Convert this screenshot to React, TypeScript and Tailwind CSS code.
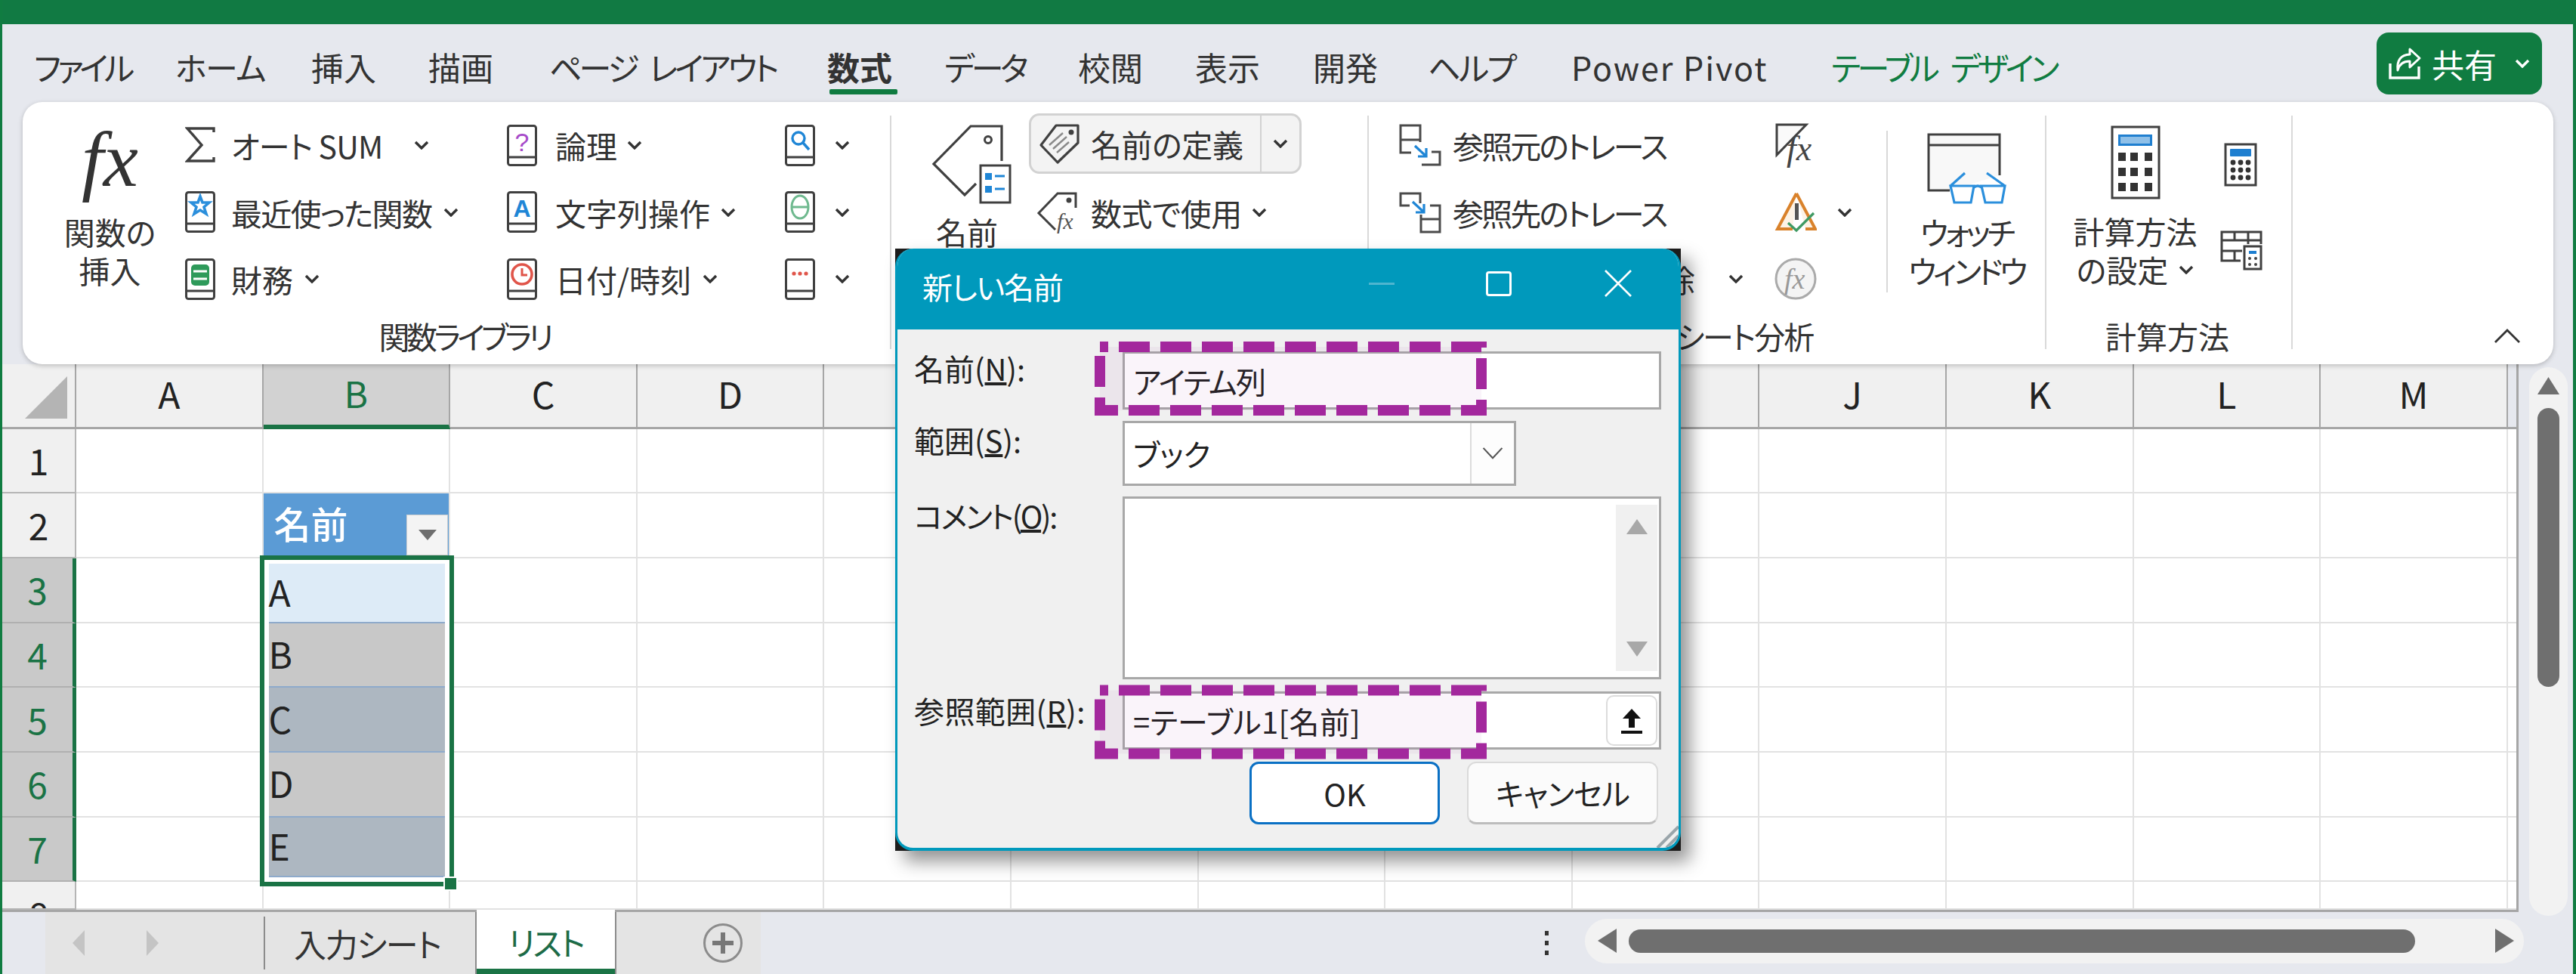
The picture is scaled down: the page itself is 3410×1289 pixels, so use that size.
import * as React from "react";

const INK = "#404040";
const COLS = ["A", "B", "C", "D", "E", "F", "G", "H", "I", "J", "K", "L", "M"];
const ROWS = [1, 2, 3, 4, 5, 6, 7, 8];

const TABS = [
  { label: "ファイル", w: "w-[187px]", cls: "tracking-[-0.12em]" },
  { label: "ホーム", w: "w-[180px]", cls: "tracking-[-0.03em]" },
  { label: "挿入", w: "w-[155px]", cls: "" },
  { label: "描画", w: "w-[160px]", cls: "" },
  { label: "ページ レイアウト", w: "w-[368px]", cls: "tracking-[-0.09em] [word-spacing:0.25em]" },
  { label: "数式", w: "w-[155px]", cls: "font-bold", active: true },
  { label: "データ", w: "w-[177px]", cls: "tracking-[-0.1em]" },
  { label: "校閲", w: "w-[155px]", cls: "" },
  { label: "表示", w: "w-[156px]", cls: "" },
  { label: "開発", w: "w-[152px]", cls: "" },
  { label: "ヘルプ", w: "w-[190px]", cls: "tracking-[-0.06em]" },
  { label: "Power Pivot", w: "w-[344px]", cls: "tracking-[0.045em]" },
  { label: "テーブル デザイン", w: "w-[320px]", cls: "text-[#107c41] tracking-[-0.1em] [word-spacing:0.3em]" },
];

function Chevron(props: { className?: string; color?: string }) {
  return (
    <svg viewBox="0 0 20 12" className={props.className ?? "w-[20px] h-[12px] shrink-0"}>
      <polyline points="2,2 10,10 18,2" fill="none" stroke={props.color ?? "#333"} strokeWidth="3.4" />
    </svg>
  );
}

function Book(props: { children?: React.ReactNode }) {
  return (
    <svg viewBox="0 0 40 55" className="w-[40px] h-[55px] shrink-0">
      <rect x="1.5" y="1.5" width="37" height="52" rx="3" fill="#fff" stroke={INK} strokeWidth="3" />
      <line x1="2" y1="43" x2="38" y2="43" stroke={INK} strokeWidth="3" />
      {props.children}
    </svg>
  );
}

function Sigma() {
  return (
    <svg viewBox="0 0 40 50" className="w-[40px] h-[50px] shrink-0">
      <polyline points="38,8 38,3 3,3 22,25 3,46 38,46 38,41" fill="none" stroke={INK} strokeWidth="3.4" />
    </svg>
  );
}

function RibbonItem(props: {
  icon?: React.ReactNode;
  label: string;
  iconW: string;
  labelW: string;
  labelCls?: string;
  chevron?: boolean;
  chevronCls?: string;
}) {
  return (
    <div className="flex items-center h-full">
      <div className={`${props.iconW} shrink-0 flex items-center`}>{props.icon}</div>
      <div className={`${props.labelW} ${props.labelCls ?? ""} shrink-0 whitespace-nowrap text-[41px] leading-[50px]`}>{props.label}</div>
      {props.chevron ? <Chevron className={`w-[20px] h-[12px] shrink-0 ${props.chevronCls ?? ""}`} /> : null}
    </div>
  );
}

function GroupLabel(props: { children: React.ReactNode; className?: string }) {
  return <div className={`h-[64px] flex items-center justify-center text-[41px] whitespace-nowrap ${props.className ?? ""}`}>{props.children}</div>;
}

function Separator() {
  return <div className="w-[2px] h-[309px] mt-[18px] bg-[#d9d9d9] shrink-0" />;
}

function BigTag() {
  return (
    <svg viewBox="1230 160 110 112" className="w-[110px] h-[112px] shrink-0">
      <path d="M1326 213 V167 H1285 L1236 217 L1277 258 L1292 243" fill="none" stroke={INK} strokeWidth="3.2" />
      <circle cx="1308" cy="185" r="4.5" fill="none" stroke={INK} strokeWidth="3" />
      <rect x="1298" y="219" width="39" height="49" fill="#fff" stroke={INK} strokeWidth="3" />
      <rect x="1304" y="229" width="9" height="9" fill="#1f86d6" />
      <rect x="1304" y="246" width="9" height="9" fill="#1f86d6" />
      <line x1="1317" y1="233" x2="1330" y2="233" stroke="#1f86d6" strokeWidth="3" />
      <line x1="1317" y1="250" x2="1330" y2="250" stroke="#1f86d6" strokeWidth="3" />
    </svg>
  );
}

function SmallTag() {
  return (
    <svg viewBox="1374 160 56 56" className="w-[56px] h-[56px] shrink-0">
      <path d="M1426 164 H1397 L1377 190 L1399 213 L1426 187 Z" fill="none" stroke={INK} strokeWidth="3.2" strokeLinejoin="round" />
      <circle cx="1417" cy="173" r="3.5" fill={INK} />
      <path d="M1388 190 L1406 174 M1393 195 L1411 179 M1398 200 L1414 186" stroke="#8a8a8a" strokeWidth="2.4" />
    </svg>
  );
}

function FxTag() {
  return (
    <svg viewBox="1374 250 58 58" className="w-[58px] h-[58px] shrink-0">
      <path d="M1426 273 V254 H1402 L1377 280 L1399 302" fill="none" stroke={INK} strokeWidth="3" />
      <circle cx="1417" cy="263" r="3.5" fill={INK} />
      <text x="1401" y="301" fontSize="30" fontStyle="italic" fontFamily="'Liberation Serif', serif" fill="#555">fx</text>
    </svg>
  );
}

function TraceFrom() {
  return (
    <svg viewBox="1850 160 60 60" className="w-[60px] h-[60px] shrink-0">
      <path d="M1880 186 V164 H1854 V200 H1868 M1854 183 H1880" fill="none" stroke="#4a4a4a" strokeWidth="3" />
      <path d="M1895 199 H1906 V216 H1882" fill="none" stroke="#4a4a4a" strokeWidth="3" />
      <path d="M1873 191 L1887 204 M1888 194 V205 H1877" fill="none" stroke="#1f86d6" strokeWidth="3.2" />
    </svg>
  );
}

function TraceTo() {
  return (
    <svg viewBox="1850 250 60 60" className="w-[60px] h-[60px] shrink-0">
      <path d="M1866 271 H1854 V255 H1880 V268" fill="none" stroke="#4a4a4a" strokeWidth="3" />
      <path d="M1893 271 H1906 V306 H1881 V283 M1881 289 H1906" fill="none" stroke="#4a4a4a" strokeWidth="3" />
      <path d="M1870 266 L1884 279 M1885 269 V280 H1874" fill="none" stroke="#1f86d6" strokeWidth="3.2" />
    </svg>
  );
}

function FxShow() {
  return (
    <svg viewBox="0 0 60 60" className="w-[60px] h-[60px] shrink-0">
      <path d="M7 3 H46 L7 43 Z" fill="#fafafa" stroke={INK} strokeWidth="3" />
      <text x="20" y="50" fontSize="46" fontStyle="italic" fontFamily="'Liberation Serif', serif" fill="#444">fx</text>
    </svg>
  );
}

function ErrorCheck() {
  return (
    <svg viewBox="0 0 60 60" className="w-[60px] h-[60px] shrink-0">
      <path d="M33 5 L58 52 H45 M28 52 H8 L33 5" fill="#fdf3e6" stroke="#d9822b" strokeWidth="4" />
      <rect x="31" y="18" width="5" height="22" fill="#555" />
      <polyline points="22,44 33,54 56,31" fill="none" stroke="#3f9a63" strokeWidth="3.2" />
    </svg>
  );
}

function FxCircle() {
  return (
    <svg viewBox="0 0 60 60" className="w-[60px] h-[60px] shrink-0">
      <circle cx="32" cy="30" r="26" fill="#f4f4f4" stroke="#aaa" strokeWidth="3" />
      <text x="17" y="43" fontSize="38" fontStyle="italic" fontFamily="'Liberation Serif', serif" fill="#999">fx</text>
    </svg>
  );
}

function WatchWindow() {
  return (
    <svg viewBox="2545 170 115 105" className="w-[115px] h-[105px] shrink-0">
      <path d="M2580 252 H2552 V178 H2646 V232" fill="#f8f8f8" stroke={INK} strokeWidth="3" />
      <line x1="2552" y1="192" x2="2646" y2="192" stroke={INK} strokeWidth="3" />
      <path d="M2581 246 H2612 L2608 268 H2586 Z M2622 246 H2653 L2649 268 H2627 Z M2612 248 Q2617 244 2622 248 M2581 246 L2600 229 M2653 246 L2629 229" fill="#fff" stroke="#2b8fdc" strokeWidth="3.2" />
    </svg>
  );
}

function CalcBig() {
  const xs = [2801, 2817, 2836];
  const ys = [202, 222, 242];
  return (
    <svg viewBox="2788 165 72 100" className="w-[72px] h-[100px] shrink-0">
      <rect x="2793" y="168" width="62" height="94" fill="#fff" stroke={INK} strokeWidth="3" />
      <rect x="2801" y="178" width="45" height="15" fill="#1f7fd0" />
      <rect x="2804" y="181" width="39" height="9" fill="#8fc0e8" />
      {ys.map((y) => xs.map((x) => <rect key={`${x}-${y}`} x={x} y={y} width="10" height="11" fill="#333" />))}
    </svg>
  );
}

function CalcSmall() {
  const xs = [2957, 2967, 2977];
  const ys = [215, 225, 235];
  return (
    <svg viewBox="2945 189 44 58" className="w-[44px] h-[58px] shrink-0">
      <rect x="2947" y="191" width="40" height="54" fill="#fff" stroke={INK} strokeWidth="3" />
      <rect x="2953" y="197" width="28" height="10" rx="1" fill="#1f7fd0" />
      {ys.map((y) => xs.map((x) => <circle key={`${x}-${y}`} cx={x} cy={y} r="3.4" fill="#333" />))}
    </svg>
  );
}

function CalcSheet() {
  return (
    <svg viewBox="2936 301 62 58" className="w-[62px] h-[58px] shrink-0">
      <path d="M2993 322 V306 H2941 V344 H2966 M2941 317 H2993 M2941 331 H2968 M2958 306 V317 M2976 306 V322 M2958 331 V344" fill="none" stroke={INK} strokeWidth="3" />
      <rect x="2971" y="325" width="22" height="30" fill="#fff" stroke={INK} strokeWidth="3" />
      <rect x="2977" y="331" width="10" height="4" fill="#1f7fd0" />
      <circle cx="2978" cy="341" r="2" fill="#444" />
      <circle cx="2986" cy="341" r="2" fill="#444" />
      <circle cx="2978" cy="349" r="2" fill="#444" />
      <circle cx="2986" cy="349" r="2" fill="#444" />
    </svg>
  );
}

function ShareIcon() {
  return (
    <svg viewBox="3160 60 46 48" className="w-[46px] h-[48px] shrink-0">
      <path d="M3164 84 V103 H3202 V88" fill="none" stroke="#fff" strokeWidth="3.4" />
      <path d="M3190 65 L3203 77 L3190 89 V81 Q3177 81 3174 93 Q3172 73 3190 72 Z" fill="none" stroke="#fff" strokeWidth="3" strokeLinejoin="round" />
    </svg>
  );
}

function FunctionLibrary() {
  return (
    <div className="w-[1148px] shrink-0 flex flex-col pt-[13px]">
      <div className="flex h-[265px]">
        <div className="w-[215px] shrink-0 pl-[16px] flex flex-col items-center">
          <div className="h-[133px] w-full flex justify-center italic text-[104px] leading-[125px] [font-family:'Liberation_Serif',serif]">fx</div>
          <div className="text-[41px] leading-[51px] text-center">関数の<br />挿入</div>
        </div>
        <div className="w-[426px] shrink-0 grid grid-rows-[repeat(3,88.5px)]">
          <RibbonItem icon={<Sigma />} label="オート SUM" iconW="w-[61px]" labelW="w-[242px]" labelCls="tracking-[-0.02em]" chevron />
          <RibbonItem icon={<Book><path d="M20 7 L23 15 L32 15 L25 21 L28 30 L20 25 L12 30 L15 21 L8 15 L17 15 Z" fill="#fff" stroke="#2b8fdc" strokeWidth="3.6" /></Book>} label="最近使った関数" iconW="w-[61px]" labelW="w-[281px]" labelCls="tracking-[-0.04em]" chevron />
          <RibbonItem icon={<Book><rect x="8" y="8" width="24" height="28" rx="5" fill="#2e9a5a" /><path d="M11 17 H29 M11 27 H29" stroke="#fff" strokeWidth="3" /></Book>} label="財務" iconW="w-[61px]" labelW="w-[97px]" chevron />
        </div>
        <div className="w-[368px] shrink-0 grid grid-rows-[repeat(3,88.5px)]">
          <RibbonItem icon={<Book><text x="20" y="35" textAnchor="middle" fontSize="34" fill="#a64ac9" fontFamily="'Liberation Sans', sans-serif">?</text></Book>} label="論理" iconW="w-[64px]" labelW="w-[95px]" chevron />
          <RibbonItem icon={<Book><text x="20" y="34" textAnchor="middle" fontSize="32" fontWeight="bold" fill="#1f86d6" fontFamily="'Liberation Sans', sans-serif">A</text></Book>} label="文字列操作" iconW="w-[64px]" labelW="w-[219px]" chevron />
          <RibbonItem icon={<Book><circle cx="20" cy="21" r="13" fill="#fff" stroke="#e0554a" strokeWidth="3.6" /><path d="M20 13 V22 H27" fill="none" stroke="#e0554a" strokeWidth="3" /></Book>} label="日付/時刻" iconW="w-[64px]" labelW="w-[195px]" chevron />
        </div>
        <div className="flex-1 grid grid-rows-[repeat(3,88.5px)]">
          <RibbonItem icon={<Book><circle cx="18" cy="18" r="8" fill="none" stroke="#1f86d6" strokeWidth="3.4" /><line x1="24" y1="24" x2="32" y2="33" stroke="#1f86d6" strokeWidth="3.6" /></Book>} label="" iconW="w-[66px]" labelW="w-0" chevron />
          <RibbonItem icon={<Book><ellipse cx="20" cy="21" rx="11" ry="15" fill="none" stroke="#6fb98f" strokeWidth="3" /><line x1="9" y1="21" x2="31" y2="21" stroke="#6fb98f" strokeWidth="3" /></Book>} label="" iconW="w-[66px]" labelW="w-0" chevron />
          <RibbonItem icon={<Book><circle cx="12" cy="20" r="2.6" fill="#e0554a" /><circle cx="20" cy="20" r="2.6" fill="#e0554a" /><circle cx="28" cy="20" r="2.6" fill="#e0554a" /></Book>} label="" iconW="w-[66px]" labelW="w-0" chevron />
        </div>
      </div>
      <GroupLabel className="ml-[22px] tracking-[-0.11em]">関数ライブラリ</GroupLabel>
    </div>
  );
}

function DefinedNames() {
  return (
    <div className="w-[630px] shrink-0 flex flex-col pt-[13px]">
      <div className="flex h-[265px]">
        <div className="w-[182px] shrink-0 pl-[50px] flex flex-col">
          <div className="mt-[12px] w-[110px]"><BigTag /></div>
          <div className="w-[100px] mt-[9px] text-center text-[41px] leading-[51px]">名前</div>
        </div>
        <div className="flex-1 grid grid-rows-[repeat(3,88.5px)]">
          <div className="flex items-center">
            <div className="w-[361px] h-[80px] -mt-[4px] flex rounded-[14px] border-[3px] border-[#d2d2d2] bg-[#f3f3f3]">
              <div className="w-[305px] flex items-center pl-[10px] border-r-[2px] border-[#d2d2d2]">
                <div className="w-[69px] shrink-0"><SmallTag /></div>
                <div className="text-[41px] whitespace-nowrap tracking-[-0.01em]">名前の定義</div>
              </div>
              <div className="flex-1 flex items-center justify-center"><Chevron /></div>
            </div>
          </div>
          <div className="pl-[10px]">
            <RibbonItem icon={<FxTag />} label="数式で使用" iconW="w-[72px]" labelW="w-[213px]" labelCls="tracking-[-0.01em]" chevron />
          </div>
          <div className="pl-[10px]">
            <RibbonItem label="選択範囲から作成" iconW="w-[72px]" labelW="w-[320px]" />
          </div>
        </div>
      </div>
      <GroupLabel>定義された名前</GroupLabel>
    </div>
  );
}

function FormulaAudit() {
  return (
    <div className="w-[895px] shrink-0 flex flex-col pt-[13px]">
      <div className="flex h-[265px]">
        <div className="w-[533px] shrink-0 pl-[38px] grid grid-rows-[repeat(3,88.5px)]">
          <RibbonItem icon={<TraceFrom />} label="参照元のトレース" iconW="w-[73px]" labelW="w-[320px]" labelCls="tracking-[-0.07em]" />
          <RibbonItem icon={<TraceTo />} label="参照先のトレース" iconW="w-[73px]" labelW="w-[320px]" labelCls="tracking-[-0.07em]" />
          <RibbonItem label="トレース矢印の削除" iconW="w-[73px]" labelW="w-[321px]" labelCls="flex justify-end" chevron chevronCls="ml-[44px]" />
        </div>
        <div className="w-[152px] shrink-0 grid grid-rows-[repeat(3,88.5px)]">
          <RibbonItem icon={<FxShow />} label="" iconW="w-[60px]" labelW="w-0" />
          <RibbonItem icon={<ErrorCheck />} label="" iconW="w-[87px]" labelW="w-0" chevron />
          <RibbonItem icon={<FxCircle />} label="" iconW="w-[60px]" labelW="w-0" />
        </div>
        <div className="w-[2px] h-[214px] mt-[25px] bg-[#d9d9d9] shrink-0" />
        <div className="flex-1 flex flex-col items-center">
          <div className="mt-[22px]"><WatchWindow /></div>
          <div className="mt-[6px] text-center text-[41px] leading-[51px] tracking-[-0.1em] whitespace-nowrap">ウォッチ<br />ウィンドウ</div>
        </div>
      </div>
      <GroupLabel className="-ml-[8px] tracking-[-0.05em]">ワークシート分析</GroupLabel>
    </div>
  );
}

function Calculation() {
  return (
    <div className="w-[324px] shrink-0 flex flex-col pt-[13px]">
      <div className="flex h-[265px]">
        <div className="w-[235px] shrink-0 flex flex-col items-center">
          <div className="mt-[17px]"><CalcBig /></div>
          <div className="mt-[15px] text-center text-[41px] leading-[51px] whitespace-nowrap">
            計算方法
            <div className="flex items-center justify-center gap-[14px]">の設定<Chevron /></div>
          </div>
        </div>
        <div className="flex-1 flex flex-col">
          <div className="mt-[41px]"><CalcSmall /></div>
          <div className="mt-[55px] -ml-[8px]"><CalcSheet /></div>
        </div>
      </div>
      <GroupLabel className="-ml-[4px]">計算方法</GroupLabel>
    </div>
  );
}

function Ribbon() {
  return (
    <div className="relative z-10 ml-[27px] w-[3350px] h-[347px] bg-white rounded-[26px] shadow-[0_2px_6px_rgba(0,0,0,0.22)] flex items-start">
      <FunctionLibrary />
      <Separator />
      <DefinedNames />
      <Separator />
      <FormulaAudit />
      <Separator />
      <Calculation />
      <Separator />
      <div className="flex-1 h-full flex items-end justify-end pr-[43px] pb-[27px]">
        <svg viewBox="0 0 36 20" className="w-[36px] h-[20px]">
          <polyline points="2,18 18,2 34,18" fill="none" stroke="#333" strokeWidth="2.8" />
        </svg>
      </div>
    </div>
  );
}

function BodyCell(props: { row: number }) {
  const { row } = props;
  const bg: Record<number, string> = {
    3: "bg-[#ddebf7]",
    4: "bg-[#c8c8c8]",
    5: "bg-[#adb7c1]",
    6: "bg-[#c8c8c8]",
    7: "bg-[#adb7c1]",
  };
  const letter: Record<number, string> = { 3: "A", 4: "B", 5: "C", 6: "D", 7: "E" };
  if (row === 2) {
    return (
      <div className="h-full bg-[#5b9bd5] flex items-center relative pl-[14px] text-white text-[49px] font-medium border-r-[2px] border-b-[2px] border-[#e2e2e2]">
        <span className="-mt-[6px]">名前</span>
        <div className="absolute right-[1px] bottom-[2px] w-[55px] h-[54px] bg-[#f4f4f4] border border-[#cfcfcf] flex items-center justify-center">
          <svg viewBox="0 0 24 14" className="w-[24px] h-[14px]"><polygon points="0,0 24,0 12,14" fill="#6e6e6e" /></svg>
        </div>
      </div>
    );
  }
  if (bg[row]) {
    return (
      <div className={`h-full bg-white pl-[7px] pr-[7px] ${row === 3 ? "pt-[7px]" : ""} ${row === 7 ? "pb-[6px]" : ""}`}>
        <div className={`h-full ${bg[row]} border-b-[2px] border-[#8eaacb] flex items-center text-[48px] text-[#222]`}><span className="-mt-[5px]">{letter[row]}</span></div>
      </div>
    );
  }
  return <div className="h-full border-r-[2px] border-b-[2px] border-[#e2e2e2]" />;
}

function Sheet() {
  return (
    <div className="relative w-fit border-r-[3px] border-b-[3px] border-[#a6a6a6]">
      <div className="grid grid-cols-[98px_repeat(13,247.6px)_11px] grid-rows-[85.5px_repeat(7,85.7px)_37px] bg-white">
        <div className="bg-[#f0f0f0] border-r-[2px] border-b-[3px] border-[#a6a6a6] flex items-end justify-end pr-[10px] pb-[11px]">
          <svg viewBox="0 0 56 56" className="w-[56px] h-[56px]"><polygon points="56,0 56,56 0,56" fill="#b4b4b4" /></svg>
        </div>
        {COLS.map((c) => (
          <div
            key={c}
            className={
              c === "B"
                ? "bg-[#d2d2d2] border-r-[2px] border-b-[6px] border-r-[#a6a6a6] border-b-[#1a7345] flex items-center justify-center text-[48px] text-[#1a7345]"
                : "bg-[#f0f0f0] border-r-[2px] border-b-[3px] border-[#a6a6a6] flex items-center justify-center text-[48px] text-[#222]"
            }
          >
            <span className="-mt-[6px]">{c}</span>
          </div>
        ))}
        <div className="border-b-[3px] border-[#a6a6a6] bg-[#e6e8ee]" />
        {ROWS.map((r) => {
          const sel = r >= 3 && r <= 7;
          return (
            <React.Fragment key={r}>
              <div
                className={
                  sel
                    ? "bg-[#c9c9c9] border-r-[5px] border-b-[2px] border-r-[#1a7345] border-b-[#b0b0b0] flex items-center justify-center text-[48px] text-[#1a7345]"
                    : "bg-[#f0f0f0] border-r-[2px] border-b-[2px] border-[#b5b5b5] overflow-hidden flex items-center justify-center text-[48px] text-[#222]"
                }
              >
                {r === 8 ? <span className="mt-[48px]">8</span> : <span className="-mt-[3px]">{r}</span>}
              </div>
              {COLS.map((c) => (
                <div key={c} className="min-h-0">
                  {c === "B" ? <BodyCell row={r} /> : <div className="h-full border-r-[2px] border-b-[2px] border-[#e2e2e2]" />}
                </div>
              ))}
              <div className="border-b-[2px] border-[#e2e2e2]" />
            </React.Fragment>
          );
        })}
      </div>
      {/* selection frame and fill handle */}
      <div className="absolute left-[341px] top-[253px] w-[257px] h-[438px] border-[6px] border-[#1a7345] pointer-events-none" />
      <div className="absolute left-[584px] top-[678px] w-[19px] h-[19px] bg-[#1a7345] border-[2px] border-white pointer-events-none" />
    </div>
  );
}

function TabBar() {
  return (
    <div className="flex h-[82px] text-[43px]">
      <div className="w-[57px] border-t-[3px] border-transparent" />
      <div className="w-[571px] bg-[#e4e4e4] flex items-center relative">
        <svg viewBox="0 0 16 34" className="ml-[36px] w-[16px] h-[34px]"><polygon points="16,0 16,34 0,17" fill="#c4c4c4" /></svg>
        <svg viewBox="0 0 16 34" className="ml-[82px] w-[16px] h-[34px]"><polygon points="0,0 0,34 16,17" fill="#c4c4c4" /></svg>
        <div className="ml-[139px] w-[2px] h-[70px] bg-[#8c8c8c]" />
        <div className="ml-[38px] tracking-[-0.03em] whitespace-nowrap text-[#333]">入力シート</div>
        <div className="absolute right-0 top-0 h-full w-[2px] bg-[#8c8c8c]" />
      </div>
      <div className="w-[183px] -mt-[3px] relative z-10 bg-white border-b-[7px] border-[#1a7345] flex items-center justify-center">
        <span className="text-[#1d6b47] tracking-[-0.06em] mt-[5px]">リスト</span>
      </div>
      <div className="w-[193px] bg-[#e4e4e4] border-l-[2px] border-[#8c8c8c] flex items-center pl-[114px]">
        <svg viewBox="0 0 54 54" className="w-[54px] h-[54px]">
          <circle cx="27" cy="27" r="24.5" fill="none" stroke="#8c8c8c" strokeWidth="3" />
          <path d="M27 13 V41 M13 27 H41" stroke="#777" strokeWidth="6" />
        </svg>
      </div>
      <div className="flex-1 flex items-center">
        <div className="ml-[1038px] flex flex-col gap-[7px]">
          <div className="w-[5px] h-[6px] bg-[#333]" />
          <div className="w-[5px] h-[6px] bg-[#333]" />
          <div className="w-[5px] h-[6px] bg-[#333]" />
        </div>
        <div className="ml-[48px] w-[1243px] h-[59px] -mt-[6px] rounded-full bg-[#f2f2f2] flex items-center pl-[17px]">
          <svg viewBox="0 0 25 32" className="w-[25px] h-[32px] shrink-0"><polygon points="25,0 25,32 0,16" fill="#6f6f6f" /></svg>
          <div className="ml-[16px] w-[1041px] h-[31px] rounded-full bg-[#6f6f6f] shrink-0" />
          <svg viewBox="0 0 25 32" className="ml-[106px] w-[25px] h-[32px] shrink-0"><polygon points="0,0 0,32 25,16" fill="#6f6f6f" /></svg>
        </div>
      </div>
    </div>
  );
}

function VScroll() {
  return (
    <div className="ml-[5px] mt-[4px] w-[51px] h-[726px] rounded-full bg-[#f2f2f2] flex flex-col items-center pt-[13px]">
      <svg viewBox="0 0 29 23" className="w-[29px] h-[23px] shrink-0"><polygon points="14.5,0 29,23 0,23" fill="#6f6f6f" /></svg>
      <div className="mt-[18px] w-[29px] h-[369px] rounded-full bg-[#6f6f6f]" />
    </div>
  );
}

function DashFrame(props: { className: string }) {
  return (
    <svg viewBox="0 0 519 98" className={props.className}>
      <rect x="7" y="7" width="505" height="84" fill="#a3289d" fillOpacity="0.05" stroke="none" />
      <path d="M7 7 H512 V91 H7 Z" fill="none" stroke="#a3289d" strokeWidth="14" strokeDasharray="41 14" strokeDashoffset="30" />
    </svg>
  );
}

function DialogInput(props: { h: string; children?: React.ReactNode; className?: string }) {
  return (
    <div className={`${props.h} ${props.className ?? "w-[713px]"} bg-white border-[3px] border-[#a8a8a8] relative flex items-center pl-[11px] text-[40px] text-[#222] whitespace-nowrap`}>
      {props.children}
    </div>
  );
}

function Dialog() {
  return (
    <div className="absolute z-20 left-[1182px] top-[329px] w-[1040px] h-[797px] bg-[#1c1c1c] shadow-[12px_14px_22px_rgba(0,0,0,0.42)]">
      <div className="relative w-full h-full rounded-[24px] overflow-hidden bg-[#f0f0f0] border-x-[3px] border-b-[4px] border-[#0099bc]">
        <div className="h-[107px] -mx-[3px] bg-[#0099bc] flex items-center pl-[36px] text-white text-[40px] tracking-[-0.03em]">
          <div className="w-[591px] -mt-[8px] whitespace-nowrap">新しい名前</div>
          <div className="w-[34px] h-[3px] -mt-[15px] bg-[#4fb5cf] shrink-0" />
          <div className="ml-[121px] w-[34px] h-[33px] -mt-[15px] border-[3px] border-white rounded-[4px] shrink-0" />
          <svg viewBox="0 0 36 36" className="ml-[123px] w-[36px] h-[36px] -mt-[15px] shrink-0">
            <path d="M1 1 L35 35 M35 1 L1 35" stroke="#fff" strokeWidth="2.6" />
          </svg>
        </div>
        <div className="pl-[22px] pt-[29px] text-[40px] text-[#222] leading-[50px] whitespace-nowrap">
          <div className="flex">
            <div className="w-[276px] shrink-0 -mt-[3px]">名前(<u>N</u>):</div>
            <DialogInput h="h-[77px]"><span className="tracking-[-0.04em]">アイテム列</span></DialogInput>
          </div>
          <div className="flex mt-[15px]">
            <div className="w-[276px] shrink-0">範囲(<u>S</u>):</div>
            <DialogInput h="h-[86px]" className="w-[521px]">
              ブック
              <div className="absolute right-0 top-0 h-full w-[58px] bg-[#fdfdfd] border-l-[2px] border-[#dcdcdc] flex items-center justify-center">
                <svg viewBox="0 0 30 18" className="w-[28px] h-[16px]"><polyline points="1,1 15,16 29,1" fill="none" stroke="#555" strokeWidth="2.4" /></svg>
              </div>
            </DialogInput>
          </div>
          <div className="flex mt-[14px]">
            <div className="w-[276px] shrink-0 tracking-[-0.06em]">コメント(<u>O</u>):</div>
            <DialogInput h="h-[242px]">
              <div className="absolute right-[2px] top-[8px] bottom-[8px] w-[55px] bg-[#f0f0f0] flex flex-col items-center justify-between py-[19px]">
                <svg viewBox="0 0 28 20" className="w-[28px] h-[20px]"><polygon points="14,0 28,20 0,20" fill="#a8a8a8" /></svg>
                <svg viewBox="0 0 28 20" className="w-[28px] h-[20px]"><polygon points="0,0 28,0 14,20" fill="#a8a8a8" /></svg>
              </div>
            </DialogInput>
          </div>
          <div className="flex mt-[16px]">
            <div className="w-[276px] shrink-0 tracking-[0.01em]">参照範囲(<u>R</u>):</div>
            <DialogInput h="h-[77px]">
              <span className="tracking-[0.01em]">=テーブル1[名前]</span>
              <div className="absolute right-[2px] top-[2px] bottom-[2px] w-[68px] bg-white border-[2px] border-[#dcdcdc] rounded-[10px] flex items-center justify-center">
                <svg viewBox="0 0 30 36" className="w-[30px] h-[36px]">
                  <path d="M15 2 L27 15 H19 V27 H11 V15 H3 Z" fill="#111" />
                  <rect x="1" y="31" width="28" height="4" fill="#111" />
                </svg>
              </div>
            </DialogInput>
          </div>
          <div className="flex mt-[16px] ml-[444px] gap-[36px]">
            <div className="w-[252px] h-[83px] rounded-[12px] bg-white border-[3px] border-[#0a70c4] flex items-center justify-center">OK</div>
            <div className="w-[253px] h-[83px] rounded-[12px] bg-[#fbfbfb] border-[2px] border-b-[3px] border-[#dadada] border-b-[#bdbdbd] flex items-center justify-center tracking-[-0.02em]">キャンセル</div>
          </div>
        </div>
        <svg viewBox="0 0 34 34" className="absolute right-0 bottom-0 w-[34px] h-[34px]">
          <path d="M34 6 L6 34 M34 18 L18 34" stroke="#9aa5aa" strokeWidth="4" />
        </svg>
        <DashFrame className="absolute left-[261px] top-[123px] w-[519px] h-[98px]" />
        <DashFrame className="absolute left-[261px] top-[577px] w-[519px] h-[99px]" />
      </div>
    </div>
  );
}

export default function App() {
  return (
    <div className="relative w-[3410px] h-[1289px] overflow-hidden bg-[#e6e8ee] border-l-[3px] border-r-[4px] border-[#107c41] text-[#333] [font-family:'Noto_Sans_CJK_JP','Noto_Sans',sans-serif] [font-feature-settings:'palt']">
      <div className="h-[32px] -mx-[4px] bg-[#117a43]" />
      <div className="h-[103px] flex items-start pl-[42px] pt-[25px] relative">
        {TABS.map((t) => (
          <div key={t.label} className={`${t.w} shrink-0 h-[70px] relative whitespace-nowrap text-[43px] leading-[62px] ${t.cls}`}>
            {t.label}
            {t.active ? <div className="absolute left-[3px] top-[61px] w-[90px] h-[7px] bg-[#107c41] rounded-[2px]" /> : null}
          </div>
        ))}
        <div className="absolute right-[41px] top-[11px] w-[219px] h-[82px] rounded-[16px] bg-[#107c41] text-white flex items-center pl-[14px] text-[43px]">
          <ShareIcon />
          <div className="ml-[13px] whitespace-nowrap">共有</div>
          <Chevron className="ml-[24px] w-[20px] h-[12px]" color="#fff" />
        </div>
      </div>
      <Ribbon />
      <div className="flex items-start">
        <div className="w-[3340px] shrink-0">
          <Sheet />
          <TabBar />
        </div>
        <VScroll />
      </div>
      <Dialog />
    </div>
  );
}
